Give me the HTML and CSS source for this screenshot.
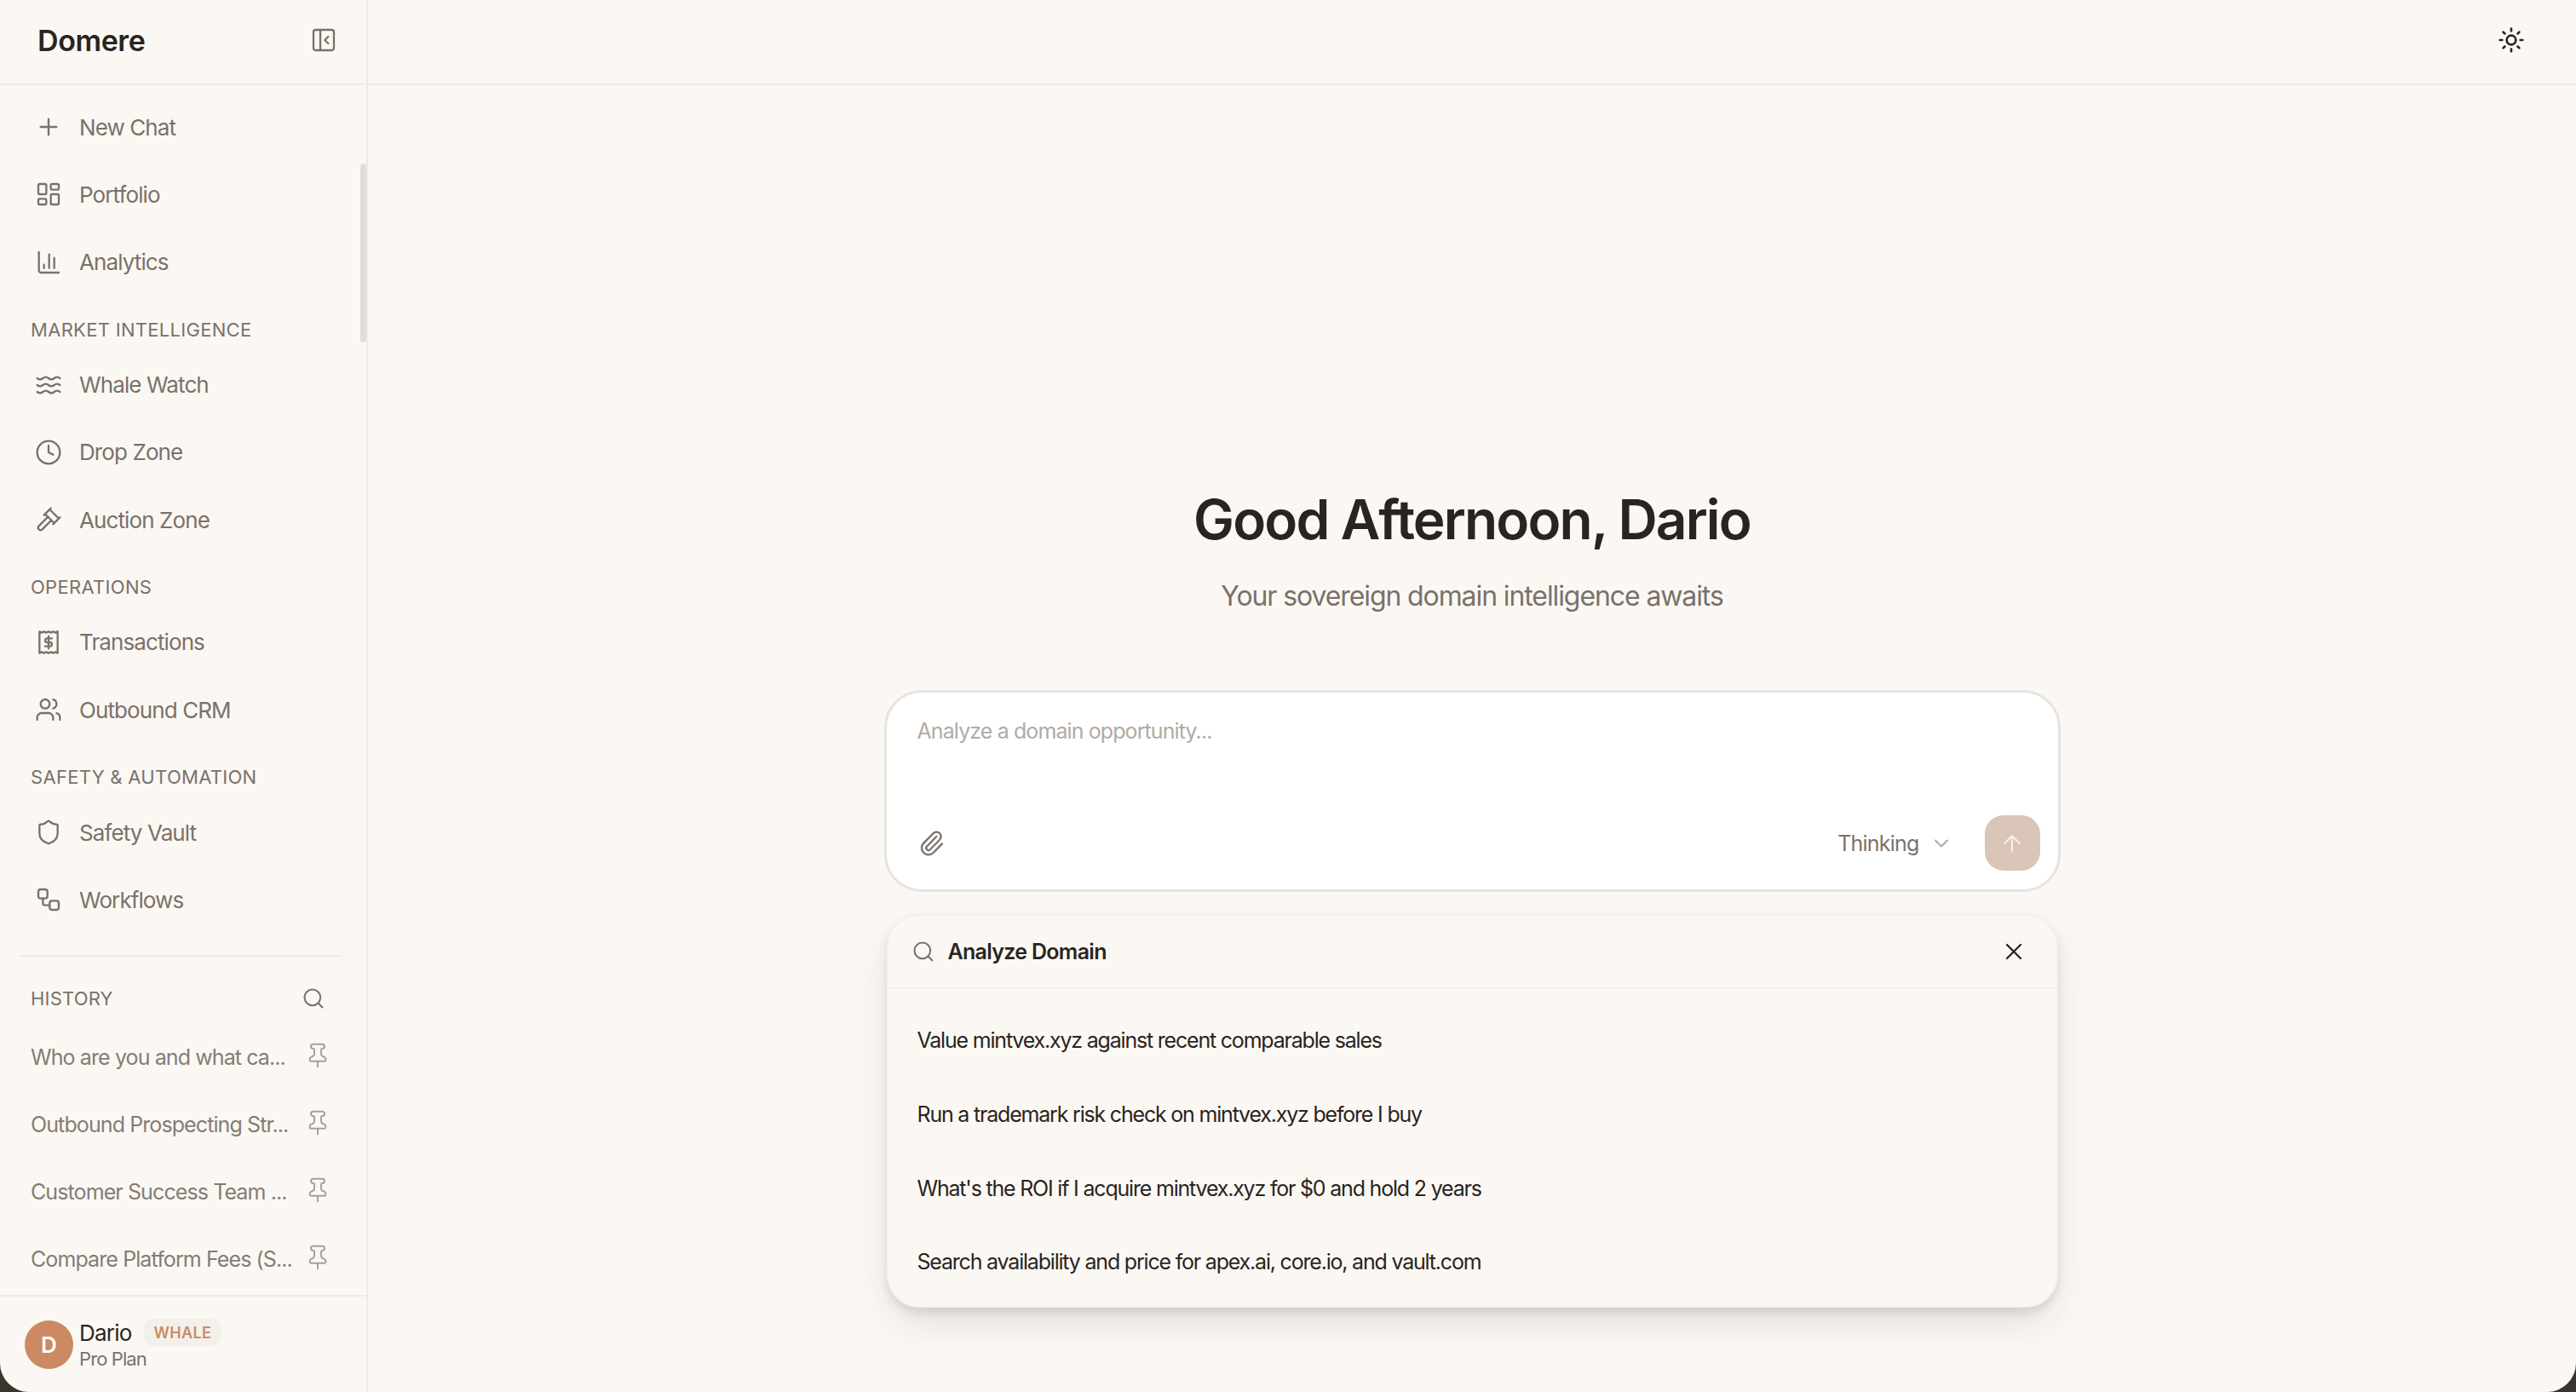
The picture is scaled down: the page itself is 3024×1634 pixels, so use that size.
FILE: index.html
```html
<!DOCTYPE html>
<html lang="en">
<head>
<meta charset="utf-8">
<title>Domere</title>
<link rel="stylesheet" href="styles.css">
</head>
<body>
<div class="app">
  <aside class="sidebar">
    <div class="side-head">
      <span class="brand">Domere</span>
      <svg class="ic" viewBox="0 0 24 24"><rect x="3" y="3" width="18" height="18" rx="2"/><path d="M9 3v18M16 15l-3-3 3-3"/></svg>
    </div>
    <nav class="nav">
      <div class="thumb"></div>
      <a class="item"><svg class="ic" viewBox="0 0 24 24"><path d="M5 12h14M12 5v14"/></svg>New Chat</a>
      <a class="item"><svg class="ic" viewBox="0 0 24 24"><rect x="3" y="3" width="7" height="9" rx="1"/><rect x="14" y="3" width="7" height="5" rx="1"/><rect x="14" y="12" width="7" height="9" rx="1"/><rect x="3" y="16" width="7" height="5" rx="1"/></svg>Portfolio</a>
      <a class="item"><svg class="ic" viewBox="0 0 24 24"><path d="M3.5 3v16a2 2 0 0 0 2 2h15.5M17 17V8M12.5 17V5M8 17v-3"/></svg>Analytics</a>
      <div class="label">MARKET INTELLIGENCE</div>
      <a class="item"><svg class="ic" viewBox="0 0 24 24"><path d="M2 6c.6.5 1.2 1 2.5 1C7 7 7 5 9.5 5c2.6 0 2.4 2 5 2 2.5 0 2.5-2 5-2 1.3 0 1.9.5 2.5 1M2 12c.6.5 1.2 1 2.5 1 2.5 0 2.5-2 5-2 2.6 0 2.4 2 5 2 2.5 0 2.5-2 5-2 1.3 0 1.9.5 2.5 1M2 18c.6.5 1.2 1 2.5 1 2.5 0 2.5-2 5-2 2.6 0 2.4 2 5 2 2.5 0 2.5-2 5-2 1.3 0 1.9.5 2.5 1"/></svg>Whale Watch</a>
      <a class="item"><svg class="ic" viewBox="0 0 24 24"><circle cx="12" cy="12" r="10"/><path d="M12 6v6l4 2"/></svg>Drop Zone</a>
      <a class="item"><svg class="ic" viewBox="0 0 24 24"><path d="M14.5 12.5l-8 8a2.12 2.12 0 1 1-3-3l8-8M16 16l6-6M8 8l6-6M9 7l8 8M21 11l-8-8"/></svg>Auction Zone</a>
      <div class="label">OPERATIONS</div>
      <a class="item"><svg class="ic" viewBox="0 0 24 24"><path d="M4 2.5l2 1 2-1 2 1 2-1 2 1 2-1 2 1 2-1v19l-2-1-2 1-2-1-2 1-2-1-2 1-2-1-2 1zM15 8.5h-4.2a1.7 1.7 0 0 0 0 3.5h2.4a1.7 1.7 0 0 1 0 3.5H9M12 6.5v11"/></svg>Transactions</a>
      <a class="item"><svg class="ic" viewBox="0 0 24 24"><path d="M16 21v-2a4 4 0 0 0-4-4H6a4 4 0 0 0-4 4v2M22 21v-2a4 4 0 0 0-3-3.87M16 3.13a4 4 0 0 1 0 7.75"/><circle cx="9" cy="7" r="4"/></svg>Outbound CRM</a>
      <div class="label">SAFETY &amp; AUTOMATION</div>
      <a class="item"><svg class="ic" viewBox="0 0 24 24"><path d="M20 13c0 5-3.5 7.5-7.66 8.95a1 1 0 0 1-.67-.01C7.5 20.5 4 18 4 13V6a1 1 0 0 1 1-1c2 0 4.5-1.2 6.24-2.72a1.17 1.17 0 0 1 1.52 0C14.51 3.81 17 5 19 5a1 1 0 0 1 1 1z"/></svg>Safety Vault</a>
      <a class="item"><svg class="ic" viewBox="0 0 24 24"><rect x="3" y="3" width="8" height="8" rx="2"/><path d="M7 11v4a2 2 0 0 0 2 2h4"/><rect x="13" y="13" width="8" height="8" rx="2"/></svg>Workflows</a>
      <div class="rule"></div>
      <div class="hist-head"><span>HISTORY</span><svg class="ic ic-sm" viewBox="0 0 24 24"><circle cx="11" cy="11" r="8"/><path d="M21 21l-4.3-4.3"/></svg></div>
      <a class="hist"><span>Who are you and what ca...</span><svg class="ic pin" viewBox="0 0 24 24"><use href="#pin"/></svg></a>
      <a class="hist"><span>Outbound Prospecting Str...</span><svg class="ic pin" viewBox="0 0 24 24"><use href="#pin"/></svg></a>
      <a class="hist"><span>Customer Success Team ...</span><svg class="ic pin" viewBox="0 0 24 24"><use href="#pin"/></svg></a>
      <a class="hist"><span>Compare Platform Fees (S...</span><svg class="ic pin" viewBox="0 0 24 24"><use href="#pin"/></svg></a>
    </nav>
    <div class="user">
      <div class="avatar">D</div>
      <div class="who">
        <div class="who-top"><span class="name">Dario</span><span class="badge">WHALE</span></div>
        <div class="plan">Pro Plan</div>
      </div>
    </div>
  </aside>
  <main class="main">
    <header class="top">
      <svg class="ic sun" viewBox="0 0 24 24"><circle cx="12" cy="12" r="4"/><path d="M12 2v2M12 20v2M4.93 4.93l1.41 1.41M17.66 17.66l1.41 1.41M2 12h2M20 12h2M6.34 17.66l-1.41 1.41M19.07 4.93l-1.41 1.41"/></svg>
    </header>
    <section class="center">
      <h1 class="title">Good Afternoon, Dario</h1>
      <p class="sub">Your sovereign domain intelligence awaits</p>
      <div class="column">
        <div class="composer">
          <div class="placeholder">Analyze a domain opportunity...</div>
          <div class="tools">
            <svg class="ic" viewBox="0 0 24 24"><path d="M13.234 20.252L21 12.3M16 6l-8.414 8.586a2 2 0 0 0 0 2.828 2 2 0 0 0 2.828 0l8.414-8.586a4 4 0 0 0 0-5.656 4 4 0 0 0-5.656 0l-8.415 8.585a6 6 0 1 0 8.486 8.486"/></svg>
            <span class="mode">Thinking</span>
            <svg class="ic ic-sm chev" viewBox="0 0 24 24"><path d="M6 9l6 6 6-6"/></svg>
            <button class="send"><svg class="ic" viewBox="0 0 24 24"><path d="M5 12l7-7 7 7M12 19V5"/></svg></button>
          </div>
        </div>
        <div class="panel">
          <div class="panel-head">
            <svg class="ic ic-sm" viewBox="0 0 24 24"><circle cx="11" cy="11" r="8"/><path d="M21 21l-4.3-4.3"/></svg>
            <span class="panel-title">Analyze Domain</span>
            <svg class="ic close" viewBox="0 0 24 24"><path d="M18 6L6 18M6 6l12 12"/></svg>
          </div>
          <ul class="rows">
            <li>Value mintvex.xyz against recent comparable sales</li>
            <li>Run a trademark risk check on mintvex.xyz before I buy</li>
            <li>What's the ROI if I acquire mintvex.xyz for $0 and hold 2 years</li>
            <li>Search availability and price for apex.ai, core.io, and vault.com</li>
          </ul>
        </div>
      </div>
    </section>
  </main>
</div>
<svg class="defs" aria-hidden="true"><symbol id="pin" viewBox="0 0 24 24"><path d="M12 17v5M9 10.76a2 2 0 0 1-1.11 1.79l-1.78.9A2 2 0 0 0 5 15.24V16a1 1 0 0 0 1 1h12a1 1 0 0 0 1-1v-.76a2 2 0 0 0-1.11-1.79l-1.78-.9A2 2 0 0 1 15 10.76V7a1 1 0 0 1 1-1 2 2 0 0 0 0-4H8a2 2 0 0 0 0 4 1 1 0 0 1 1 1z"/></symbol></svg>
</body>
</html>
```
FILE: styles.css
```css
* { box-sizing: border-box; }
html, body { margin: 0; height: 100%; }
body {
  background: #3a332e;
  font-family: Inter, "Liberation Sans", sans-serif;
  color: #2a2420;
  overflow: hidden;
}
.defs { display: none; }
.app {
  display: flex;
  height: 1634px;
  background: #fbf8f4;
  border-radius: 0 0 34px 34px;
  overflow: hidden;
}
.ic {
  width: 32px;
  height: 32px;
  flex: none;
  fill: none;
  stroke: #7a716a;
  stroke-width: 1.75;
  stroke-linecap: round;
  stroke-linejoin: round;
}
.ic-sm { width: 28px; height: 28px; }

.sidebar {
  width: 432px;
  flex: none;
  display: flex;
  flex-direction: column;
  border-right: 2px solid #eeeae6;
}
.side-head {
  height: 100px;
  flex: none;
  display: flex;
  align-items: center;
  justify-content: space-between;
  padding: 0 34px 4px 44px;
  border-bottom: 2px solid #eeeae6;
}
.brand { font-size: 34px; font-weight: 600; letter-spacing: -0.4px; }
.nav {
  position: relative;
  flex: 1;
  padding-top: 9.5px;
}
.thumb {
  position: absolute;
  right: 0;
  top: 92px;
  width: 7px;
  height: 210px;
  border-radius: 4px;
  background: #e2ddd8;
}
.item {
  height: 79.3px;
  display: flex;
  align-items: center;
  gap: 20px;
  padding-left: 41px;
  font-size: 26px;
  letter-spacing: -0.9px;
  color: #7a716a;
}
.label {
  height: 64.5px;
  padding: 14px 0 0 36px;
  display: flex;
  align-items: center;
  font-size: 22px;
  letter-spacing: 0.3px;
  color: #7a716a;
}
.rule {
  height: 2px;
  margin: 25px 28px 0 22px;
  background: #eeeae6;
}
.hist-head {
  display: flex;
  align-items: center;
  justify-content: space-between;
  height: 50px;
  margin: 24px 0 5px;
  padding: 0 48px 0 36px;
  font-size: 22px;
  letter-spacing: 0.2px;
  color: #7a716a;
}
.hist {
  height: 79px;
  display: flex;
  align-items: center;
  justify-content: space-between;
  padding: 0 41px 0 36px;
  font-size: 25px;
  letter-spacing: -0.9px;
  color: #857c75;
  white-space: nowrap;
}
.pin { stroke: #a8a099; stroke-width: 1.5; margin-top: -4px; }
.user {
  height: 114px;
  flex: none;
  display: flex;
  align-items: center;
  gap: 7px;
  padding: 0 0 0 29px;
  border-top: 2px solid #eeeae6;
}
.avatar {
  width: 57px;
  height: 57px;
  border-radius: 50%;
  background: #cc8a63;
  color: #fff;
  display: flex;
  align-items: center;
  justify-content: center;
  font-size: 26px;
  font-weight: 600;
}
.who-top { display: flex; align-items: center; gap: 15px; }
.name { font-size: 26px; letter-spacing: -0.8px; }
.badge {
  height: 32px;
  padding: 0 11px;
  display: flex;
  align-items: center;
  border-radius: 10px;
  background: #f3f0ec;
  color: #cc8a63;
  font-size: 18px;
  font-weight: 600;
  letter-spacing: 0.4px;
}
.plan { font-size: 22px; letter-spacing: -0.9px; color: #7a716a; margin-top: 2px; }

.main { flex: 1; display: flex; flex-direction: column; min-width: 0; }
.top {
  height: 100px;
  flex: none;
  display: flex;
  align-items: center;
  justify-content: flex-end;
  padding: 0 60px 4px 0;
  border-bottom: 2px solid #eeeae6;
}
.sun { stroke: #2a2420; stroke-width: 2; }
.center {
  flex: 1;
  display: flex;
  flex-direction: column;
  align-items: center;
  padding-top: 472px;
}
.title {
  margin: 0;
  font-size: 64px;
  line-height: 76px;
  font-weight: 600;
  letter-spacing: -1.85px;
  color: #2a2420;
}
.sub {
  margin: 28px 0 0;
  font-size: 32px;
  line-height: 48px;
  letter-spacing: -1.1px;
  color: #7a716a;
}
.column { width: 1381px; margin-top: 86px; }
.composer {
  height: 237px;
  display: flex;
  flex-direction: column;
  justify-content: space-between;
  padding: 26px 21px 22px 36px;
  border: 3px solid #e6e3e0;
  border-radius: 44px;
  background: #fff;
}
.placeholder { font-size: 25px; line-height: 38px; letter-spacing: -0.9px; color: #b2aaa3; }
.tools { display: flex; align-items: center; }
.tools > svg:first-child { margin: 0 auto 0 1px; }
.mode { font-size: 25px; letter-spacing: -0.8px; color: #7a716a; }
.chev { stroke: #b2aaa3; margin: 0 37px 0 12px; }
.send {
  width: 65px;
  height: 65px;
  padding: 0;
  border: 0;
  border-radius: 22px;
  background: #d9c6b8;
  display: flex;
  align-items: center;
  justify-content: center;
}
.send .ic { stroke: #f6efe9; width: 30px; height: 30px; }
.panel {
  margin: 26px 3px 0;
  height: 462px;
  border: 2px solid #f4f1ec;
  border-radius: 38px;
  background: #fbf8f4;
  box-shadow: 0 6px 10px rgba(40, 30, 25, .1), 0 20px 44px -6px rgba(40, 30, 25, .13);
}
.panel-head {
  height: 86px;
  display: flex;
  align-items: center;
  gap: 15px;
  padding: 0 34px 0 27px;
  border-bottom: 2px solid #f4f1ec;
}
.panel-title { flex: 1; font-size: 25px; font-weight: 600; letter-spacing: -0.7px; color: #2a2420; }
.close { stroke: #2a2420; stroke-width: 1.75; }
.rows { list-style: none; margin: 0; padding: 17px 0 0 34px; }
.rows li {
  height: 86.67px;
  display: flex;
  align-items: center;
  font-size: 25px;
  letter-spacing: -1.2px;
  color: #2a2420;
}
```
